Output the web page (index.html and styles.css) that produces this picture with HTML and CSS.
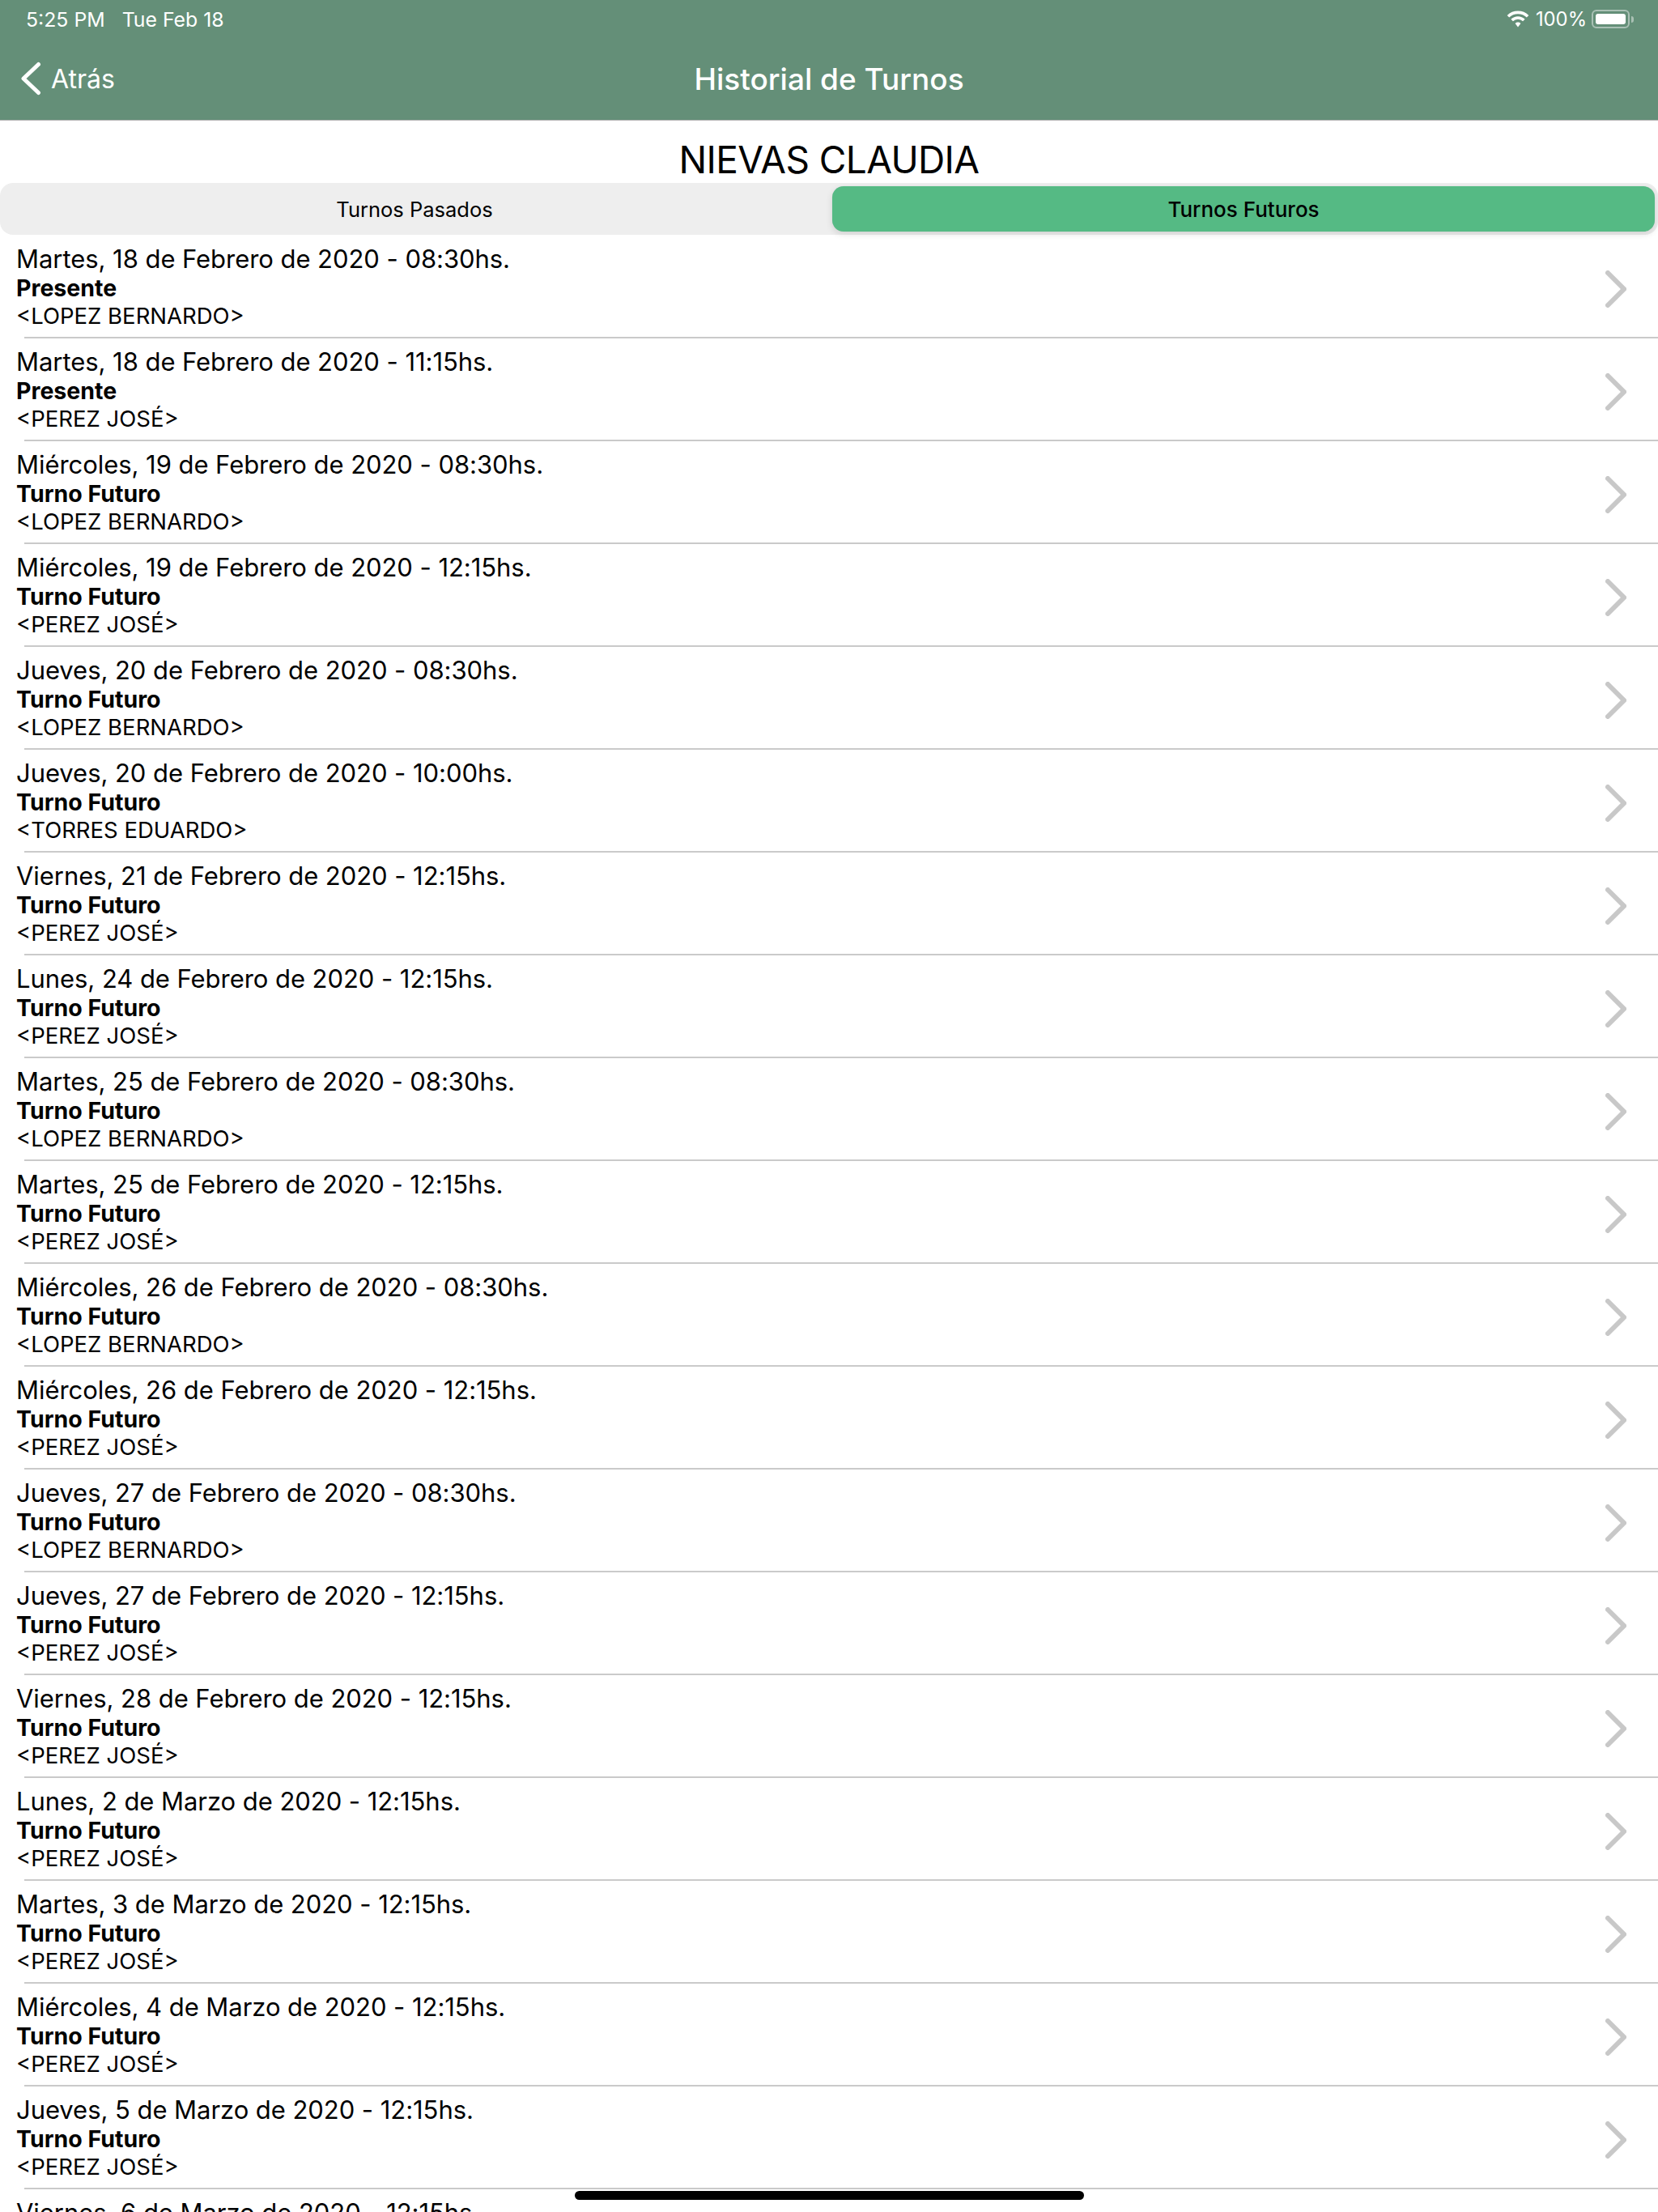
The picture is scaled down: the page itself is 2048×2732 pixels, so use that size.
FILE: index.html
```html
<!DOCTYPE html>
<html lang="es">
<head>
<meta charset="utf-8">
<title>Historial de Turnos</title>
<link rel="stylesheet" href="styles.css">
</head>
<body>
<div class="screen">
  <header class="nav">
    <div class="status">
      <div class="status-left"><span>5:25 PM</span><span>Tue Feb 18</span></div>
      <div class="status-right">
        <svg class="wifi" viewBox="0 0 26 20"><path class="wifi-arc" d="M1.500 7C7.800 .7 18.200 .7 24.500 7"/><path class="wifi-arc" d="M6 11.500c3.900-3.900 10.100-3.900 14 0"/><path class="wifi-dot" d="M9.800 15.200c1.800-1.800 4.600-1.800 6.400 0L13 19.500z"/></svg>
        <span>100%</span>
        <div class="battery"><div class="battery-fill"></div></div>
        <div class="battery-tip"></div>
      </div>
    </div>
    <div class="navbar">
      <div class="back">
        <svg class="back-icon" viewBox="0 0 26 42"><path d="M22.500 3.500L4 21l18.500 17.500"/></svg>
        <span>Atrás</span>
      </div>
      <h1 class="title">Historial de Turnos</h1>
    </div>
  </header>
  <main>
    <h2 class="patient">NIEVAS CLAUDIA</h2>
    <div class="segments">
      <div class="segment">Turnos Pasados</div>
      <div class="segment active">Turnos Futuros</div>
    </div>
    <div class="list">
      <div class="row"><div class="row-text"><div class="date">Martes, 18 de Febrero de 2020 - 08:30hs.</div><div class="state">Presente</div><div class="doctor">&lt;LOPEZ BERNARDO&gt;</div></div><svg class="chev" viewBox="0 0 26 46"><path d="M3 3l20 20L3 43"/></svg></div>
      <div class="row"><div class="row-text"><div class="date">Martes, 18 de Febrero de 2020 - 11:15hs.</div><div class="state">Presente</div><div class="doctor">&lt;PEREZ JOSÉ&gt;</div></div><svg class="chev" viewBox="0 0 26 46"><path d="M3 3l20 20L3 43"/></svg></div>
      <div class="row"><div class="row-text"><div class="date">Miércoles, 19 de Febrero de 2020 - 08:30hs.</div><div class="state">Turno Futuro</div><div class="doctor">&lt;LOPEZ BERNARDO&gt;</div></div><svg class="chev" viewBox="0 0 26 46"><path d="M3 3l20 20L3 43"/></svg></div>
      <div class="row"><div class="row-text"><div class="date">Miércoles, 19 de Febrero de 2020 - 12:15hs.</div><div class="state">Turno Futuro</div><div class="doctor">&lt;PEREZ JOSÉ&gt;</div></div><svg class="chev" viewBox="0 0 26 46"><path d="M3 3l20 20L3 43"/></svg></div>
      <div class="row"><div class="row-text"><div class="date">Jueves, 20 de Febrero de 2020 - 08:30hs.</div><div class="state">Turno Futuro</div><div class="doctor">&lt;LOPEZ BERNARDO&gt;</div></div><svg class="chev" viewBox="0 0 26 46"><path d="M3 3l20 20L3 43"/></svg></div>
      <div class="row"><div class="row-text"><div class="date">Jueves, 20 de Febrero de 2020 - 10:00hs.</div><div class="state">Turno Futuro</div><div class="doctor">&lt;TORRES EDUARDO&gt;</div></div><svg class="chev" viewBox="0 0 26 46"><path d="M3 3l20 20L3 43"/></svg></div>
      <div class="row"><div class="row-text"><div class="date">Viernes, 21 de Febrero de 2020 - 12:15hs.</div><div class="state">Turno Futuro</div><div class="doctor">&lt;PEREZ JOSÉ&gt;</div></div><svg class="chev" viewBox="0 0 26 46"><path d="M3 3l20 20L3 43"/></svg></div>
      <div class="row"><div class="row-text"><div class="date">Lunes, 24 de Febrero de 2020 - 12:15hs.</div><div class="state">Turno Futuro</div><div class="doctor">&lt;PEREZ JOSÉ&gt;</div></div><svg class="chev" viewBox="0 0 26 46"><path d="M3 3l20 20L3 43"/></svg></div>
      <div class="row"><div class="row-text"><div class="date">Martes, 25 de Febrero de 2020 - 08:30hs.</div><div class="state">Turno Futuro</div><div class="doctor">&lt;LOPEZ BERNARDO&gt;</div></div><svg class="chev" viewBox="0 0 26 46"><path d="M3 3l20 20L3 43"/></svg></div>
      <div class="row"><div class="row-text"><div class="date">Martes, 25 de Febrero de 2020 - 12:15hs.</div><div class="state">Turno Futuro</div><div class="doctor">&lt;PEREZ JOSÉ&gt;</div></div><svg class="chev" viewBox="0 0 26 46"><path d="M3 3l20 20L3 43"/></svg></div>
      <div class="row"><div class="row-text"><div class="date">Miércoles, 26 de Febrero de 2020 - 08:30hs.</div><div class="state">Turno Futuro</div><div class="doctor">&lt;LOPEZ BERNARDO&gt;</div></div><svg class="chev" viewBox="0 0 26 46"><path d="M3 3l20 20L3 43"/></svg></div>
      <div class="row"><div class="row-text"><div class="date">Miércoles, 26 de Febrero de 2020 - 12:15hs.</div><div class="state">Turno Futuro</div><div class="doctor">&lt;PEREZ JOSÉ&gt;</div></div><svg class="chev" viewBox="0 0 26 46"><path d="M3 3l20 20L3 43"/></svg></div>
      <div class="row"><div class="row-text"><div class="date">Jueves, 27 de Febrero de 2020 - 08:30hs.</div><div class="state">Turno Futuro</div><div class="doctor">&lt;LOPEZ BERNARDO&gt;</div></div><svg class="chev" viewBox="0 0 26 46"><path d="M3 3l20 20L3 43"/></svg></div>
      <div class="row"><div class="row-text"><div class="date">Jueves, 27 de Febrero de 2020 - 12:15hs.</div><div class="state">Turno Futuro</div><div class="doctor">&lt;PEREZ JOSÉ&gt;</div></div><svg class="chev" viewBox="0 0 26 46"><path d="M3 3l20 20L3 43"/></svg></div>
      <div class="row"><div class="row-text"><div class="date">Viernes, 28 de Febrero de 2020 - 12:15hs.</div><div class="state">Turno Futuro</div><div class="doctor">&lt;PEREZ JOSÉ&gt;</div></div><svg class="chev" viewBox="0 0 26 46"><path d="M3 3l20 20L3 43"/></svg></div>
      <div class="row"><div class="row-text"><div class="date">Lunes, 2 de Marzo de 2020 - 12:15hs.</div><div class="state">Turno Futuro</div><div class="doctor">&lt;PEREZ JOSÉ&gt;</div></div><svg class="chev" viewBox="0 0 26 46"><path d="M3 3l20 20L3 43"/></svg></div>
      <div class="row"><div class="row-text"><div class="date">Martes, 3 de Marzo de 2020 - 12:15hs.</div><div class="state">Turno Futuro</div><div class="doctor">&lt;PEREZ JOSÉ&gt;</div></div><svg class="chev" viewBox="0 0 26 46"><path d="M3 3l20 20L3 43"/></svg></div>
      <div class="row"><div class="row-text"><div class="date">Miércoles, 4 de Marzo de 2020 - 12:15hs.</div><div class="state">Turno Futuro</div><div class="doctor">&lt;PEREZ JOSÉ&gt;</div></div><svg class="chev" viewBox="0 0 26 46"><path d="M3 3l20 20L3 43"/></svg></div>
      <div class="row"><div class="row-text"><div class="date">Jueves, 5 de Marzo de 2020 - 12:15hs.</div><div class="state">Turno Futuro</div><div class="doctor">&lt;PEREZ JOSÉ&gt;</div></div><svg class="chev" viewBox="0 0 26 46"><path d="M3 3l20 20L3 43"/></svg></div>
      <div class="row"><div class="row-text"><div class="date">Viernes, 6 de Marzo de 2020 - 12:15hs.</div></div></div>
    </div>
  </main>
  <div class="home-bar"></div>
</div>
</body>
</html>
```

FILE: styles.css
```css
* { box-sizing: border-box; }
html, body { margin: 0; padding: 0; background: #fff; }
body { font-family: Inter, "Liberation Sans", sans-serif; color: #000; }
.screen { position: relative; width: 2048px; height: 2732px; overflow: hidden; }

.nav { height: 149px; background: #648f78; border-bottom: 1px solid #b3b3b3; color: #fff; }
.status { height: 47px; padding: 0 30px 0 32px; display: flex; justify-content: space-between; align-items: center; font-size: 24.800px; }
.status-left { display: flex; gap: 21px; }
.status-right { display: flex; align-items: center; font-size: 23.800px; }
.wifi { width: 28px; height: 21px; margin-right: 8px; }
.wifi-arc { fill: none; stroke: #fff; stroke-width: 3.400; }
.wifi-dot { fill: #fff; }
.battery { width: 47px; height: 23px; margin-left: 6px; padding: 3px; border: 2px solid rgba(255,255,255,.45); border-radius: 6px; }
.battery-fill { width: 100%; height: 100%; background: #fff; border-radius: 3px; }
.battery-tip { width: 3px; height: 8px; margin-left: 2px; background: rgba(255,255,255,.45); border-radius: 0 3px 3px 0; }
.navbar { position: relative; height: 101px; display: flex; align-items: center; justify-content: center; }
.back { position: absolute; left: 25px; top: 30px; display: flex; align-items: center; gap: 12px; font-size: 32px; line-height: 42px; }
.back-icon { width: 26px; height: 42px; display: block; margin-top: -2px; }
.back-icon path { fill: none; stroke: #fff; stroke-width: 5; stroke-linecap: round; stroke-linejoin: round; }
.title { margin: 0; font-size: 37px; font-weight: 500; line-height: 44px; }

.patient { margin: 0; height: 77px; padding-top: 19px; text-align: center; font-size: 46px; letter-spacing: -.6px; line-height: 58px; font-weight: 400; }
.segments { height: 64px; display: flex; background: #eee; border-radius: 16px; padding: 4px; }
.segment { flex: 1; display: flex; align-items: center; justify-content: center; font-size: 25.500px; border-radius: 14px; }
.segment.active { background: #55ba84; margin-left: 8px; box-shadow: 0 3px 8px rgba(0,0,0,.12), 0 0 1px rgba(0,0,0,.08); font-size: 26px; font-weight: 500; }

.row { position: relative; height: 127px; padding: 0 39px 0 20px; display: flex; align-items: flex-start; justify-content: space-between; }
.row::after { content: ""; position: absolute; left: 30px; right: 0; bottom: -1px; height: 2px; background: #cacaca; }
.row-text { flex: 1; padding-top: 10px; }
.date { font-size: 31px; letter-spacing: -.05px; line-height: 39px; }
.state { font-size: 28.500px; line-height: 34px; font-weight: 700; }
.doctor { font-size: 27.500px; line-height: 34px; }
.chev { width: 26px; height: 46px; flex: none; margin-top: 44px; }
.chev path { fill: none; stroke: #c8c8c8; stroke-width: 6; stroke-linecap: round; }

.home-bar { position: absolute; left: 710px; top: 2706px; width: 629px; height: 11px; background: #000; border-radius: 6px; }
```
